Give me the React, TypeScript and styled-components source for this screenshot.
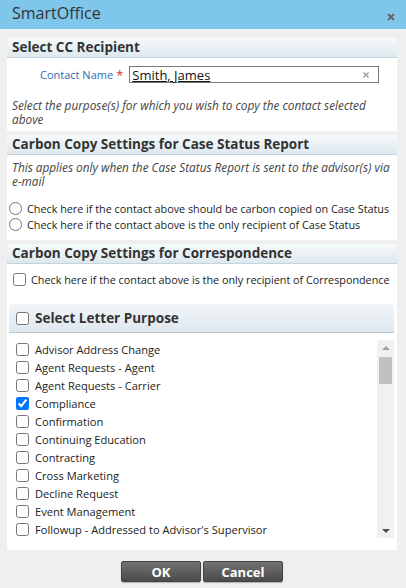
import styled, { createGlobalStyle } from 'styled-components';

const GlobalStyle = createGlobalStyle`
  html, body {
    margin: 0;
    padding: 0;
    background: #efefef;
  }
  body {
    font-family: 'Open Sans', 'Liberation Sans', sans-serif;
    font-size: 11px;
    color: #333;
  }
  * {
    box-sizing: border-box;
  }
`;

const purposes = [
  'Advisor Address Change',
  'Agent Requests - Agent',
  'Agent Requests - Carrier',
  'Compliance',
  'Confirmation',
  'Continuing Education',
  'Contracting',
  'Cross Marketing',
  'Decline Request',
  'Event Management',
  "Followup - Addressed to Advisor's Supervisor",
];

const Dialog = styled.div`
  width: 406px;
  height: 588px;
  display: flex;
  flex-direction: column;
  background: #efefef;
  overflow: hidden;
`;

const TitleBar = styled.div`
  height: 29px;
  flex: none;
  background: #7ec6ea;
  display: flex;
  align-items: center;
  justify-content: space-between;
  padding: 0 12px 0 12px;
`;

const Title = styled.span`
  font-size: 16px;
  color: #333;
  margin-top: -3px;
`;

const CloseButton = styled.button`
  border: 0;
  background: none;
  padding: 0;
  display: flex;
  margin-top: 4px;
  margin-right: -1px;
`;

const Content = styled.div`
  padding: 9px 9px 0 7px;
  display: flex;
  flex-direction: column;
  gap: 4px;
`;

const Panel = styled.section<{ $pad: number }>`
  background: #fff;
  padding-bottom: ${(p) => p.$pad}px;
`;

const SectionHeader = styled.h2`
  margin: 0;
  height: 20px;
  padding: 0 5px;
  font-size: 13.5px;
  font-weight: 700;
  line-height: 19px;
  color: #333;
  background: linear-gradient(#f6fafc, #dde8ee);
  border-bottom: 1px solid #c6d3da;
`;

const ContactRow = styled.div`
  display: flex;
  align-items: center;
  margin-top: 8px;
  padding-left: 33px;
  height: 17px;
`;

const Label = styled.label`
  color: #2c6db4;
  font-size: 11px;
`;

const Required = styled.span`
  color: #d9302c;
  margin-left: 3px;
  font-size: 13px;
`;

const InputBox = styled.div`
  margin-left: 6px;
  width: 250px;
  height: 17px;
  border: 1px solid #7a7a7a;
  display: flex;
  align-items: center;
  justify-content: space-between;
  padding: 0 9px 0 2px;
`;

const ContactValue = styled.span`
  font-size: 13px;
  color: #111;
  text-decoration: underline;
`;

const Note = styled.p<{ $top: number }>`
  margin: ${(p) => p.$top}px 0 0;
  padding: 0 2px 0 5px;
  font-style: italic;
  font-size: 11.8px;
  line-height: 14px;
  color: #444;
`;

const OptionList = styled.div<{ $top: number; $left: number }>`
  margin-top: ${(p) => p.$top}px;
  padding-left: ${(p) => p.$left}px;
  display: flex;
  flex-direction: column;
`;

const Option = styled.label<{ $gap: number }>`
  display: flex;
  align-items: center;
  gap: ${(p) => p.$gap}px;
  height: 16px;
  font-size: 10.8px;
  color: #222;
  white-space: nowrap;

  input {
    margin: 0;
    width: 13px;
    height: 13px;
    flex: none;
  }
`;

const LetterGroup = styled.div`
  margin: 17px 3px 0 2px;
`;

const LetterHeader = styled.div`
  height: 29px;
  display: flex;
  align-items: center;
  gap: 6px;
  padding-left: 7px;
  border-radius: 4px 4px 0 0;
  background: linear-gradient(#f1f6f9, #dee8ee);
  border-bottom: 1px solid #bdc9d0;
  font-size: 13.5px;
  font-weight: 700;
  color: #333;

  input {
    margin: 0;
    width: 13px;
    height: 13px;
  }
`;

const ListArea = styled.div`
  margin: 7px 0 0 7px;
  height: 198px;
  display: flex;
`;

const ItemList = styled.div`
  flex: 1;
  overflow: hidden;
`;

const Item = styled.label`
  display: flex;
  align-items: center;
  gap: 6px;
  height: 18px;
  font-size: 11.1px;
  color: #222;
  white-space: nowrap;

  input {
    margin: 0;
    width: 13px;
    height: 13px;
    flex: none;
  }
`;

const ScrollTrack = styled.div`
  width: 17px;
  flex: none;
  background: #f1f1f1;
  display: flex;
  flex-direction: column;
  align-items: center;
`;

const ScrollArrow = styled.div`
  height: 15px;
  width: 100%;
  display: flex;
  align-items: center;
  justify-content: center;
`;

const ScrollThumb = styled.div`
  margin-top: 2px;
  width: 13px;
  height: 27px;
  background: #c1c1c1;
`;

const ScrollRest = styled.div`
  flex: 1;
`;

const Footer = styled.div`
  display: flex;
  justify-content: center;
  gap: 2px;
  padding: 11px 2px 0 0;
`;

const Button = styled.button`
  width: 80px;
  height: 21px;
  border: 1px solid #444;
  border-radius: 2px;
  background: linear-gradient(#727272, #4b4b4b);
  color: #fff;
  font-family: 'Open Sans', 'Liberation Sans', sans-serif;
  font-size: 13px;
  font-weight: 700;
  padding: 0;
  box-shadow: 0 1px 1px rgba(0, 0, 0, 0.25);
`;

export default function App() {
  return (
    <Dialog>
      <GlobalStyle />
      <TitleBar>
        <Title>SmartOffice</Title>
        <CloseButton aria-label="Close">
          <svg width="8" height="8" viewBox="0 0 8 8">
            <path d="M1 1L7 7M7 1L1 7" stroke="#666" strokeWidth="2" />
          </svg>
        </CloseButton>
      </TitleBar>
      <Content>
        <Panel $pad={5}>
          <SectionHeader>Select CC Recipient</SectionHeader>
          <ContactRow>
            <Label>Contact Name</Label>
            <Required>*</Required>
            <InputBox>
              <ContactValue>Smith, James</ContactValue>
              <svg width="6" height="6" viewBox="0 0 6 6">
                <path d="M0.5 0.5L5.5 5.5M5.5 0.5L0.5 5.5" stroke="#999" strokeWidth="1.4" />
              </svg>
            </InputBox>
          </ContactRow>
          <Note $top={15}>
            Select the purpose(s) for which you wish to copy the contact selected above
          </Note>
        </Panel>

        <Panel $pad={8}>
          <SectionHeader>Carbon Copy Settings for Case Status Report</SectionHeader>
          <Note $top={5}>
            This applies only when the Case Status Report is sent to the advisor(s) via e-mail
          </Note>
          <OptionList $top={12} $left={2}>
            <Option $gap={5}>
              <input type="radio" name="cs" />
              Check here if the contact above should be carbon copied on Case Status
            </Option>
            <Option $gap={5}>
              <input type="radio" name="cs" />
              Check here if the contact above is the only recipient of Case Status
            </Option>
          </OptionList>
        </Panel>

        <Panel $pad={12}>
          <SectionHeader>Carbon Copy Settings for Correspondence</SectionHeader>
          <OptionList $top={7} $left={6}>
            <Option $gap={5}>
              <input type="checkbox" />
              Check here if the contact above is the only recipient of Correspondence
            </Option>
          </OptionList>
          <LetterGroup>
            <LetterHeader>
              <input type="checkbox" />
              Select Letter Purpose
            </LetterHeader>
            <ListArea>
              <ItemList>
                {purposes.map((p) => (
                  <Item key={p}>
                    <input type="checkbox" defaultChecked={p === 'Compliance'} />
                    {p}
                  </Item>
                ))}
              </ItemList>
              <ScrollTrack>
                <ScrollArrow>
                  <svg width="8" height="4" viewBox="0 0 8 4">
                    <path d="M0 4L4 0L8 4Z" fill="#a3a3a3" />
                  </svg>
                </ScrollArrow>
                <ScrollThumb />
                <ScrollRest />
                <ScrollArrow>
                  <svg width="8" height="4" viewBox="0 0 8 4">
                    <path d="M0 0L8 0L4 4Z" fill="#505050" />
                  </svg>
                </ScrollArrow>
              </ScrollTrack>
            </ListArea>
          </LetterGroup>
        </Panel>
      </Content>
      <Footer>
        <Button>OK</Button>
        <Button>Cancel</Button>
      </Footer>
    </Dialog>
  );
}
